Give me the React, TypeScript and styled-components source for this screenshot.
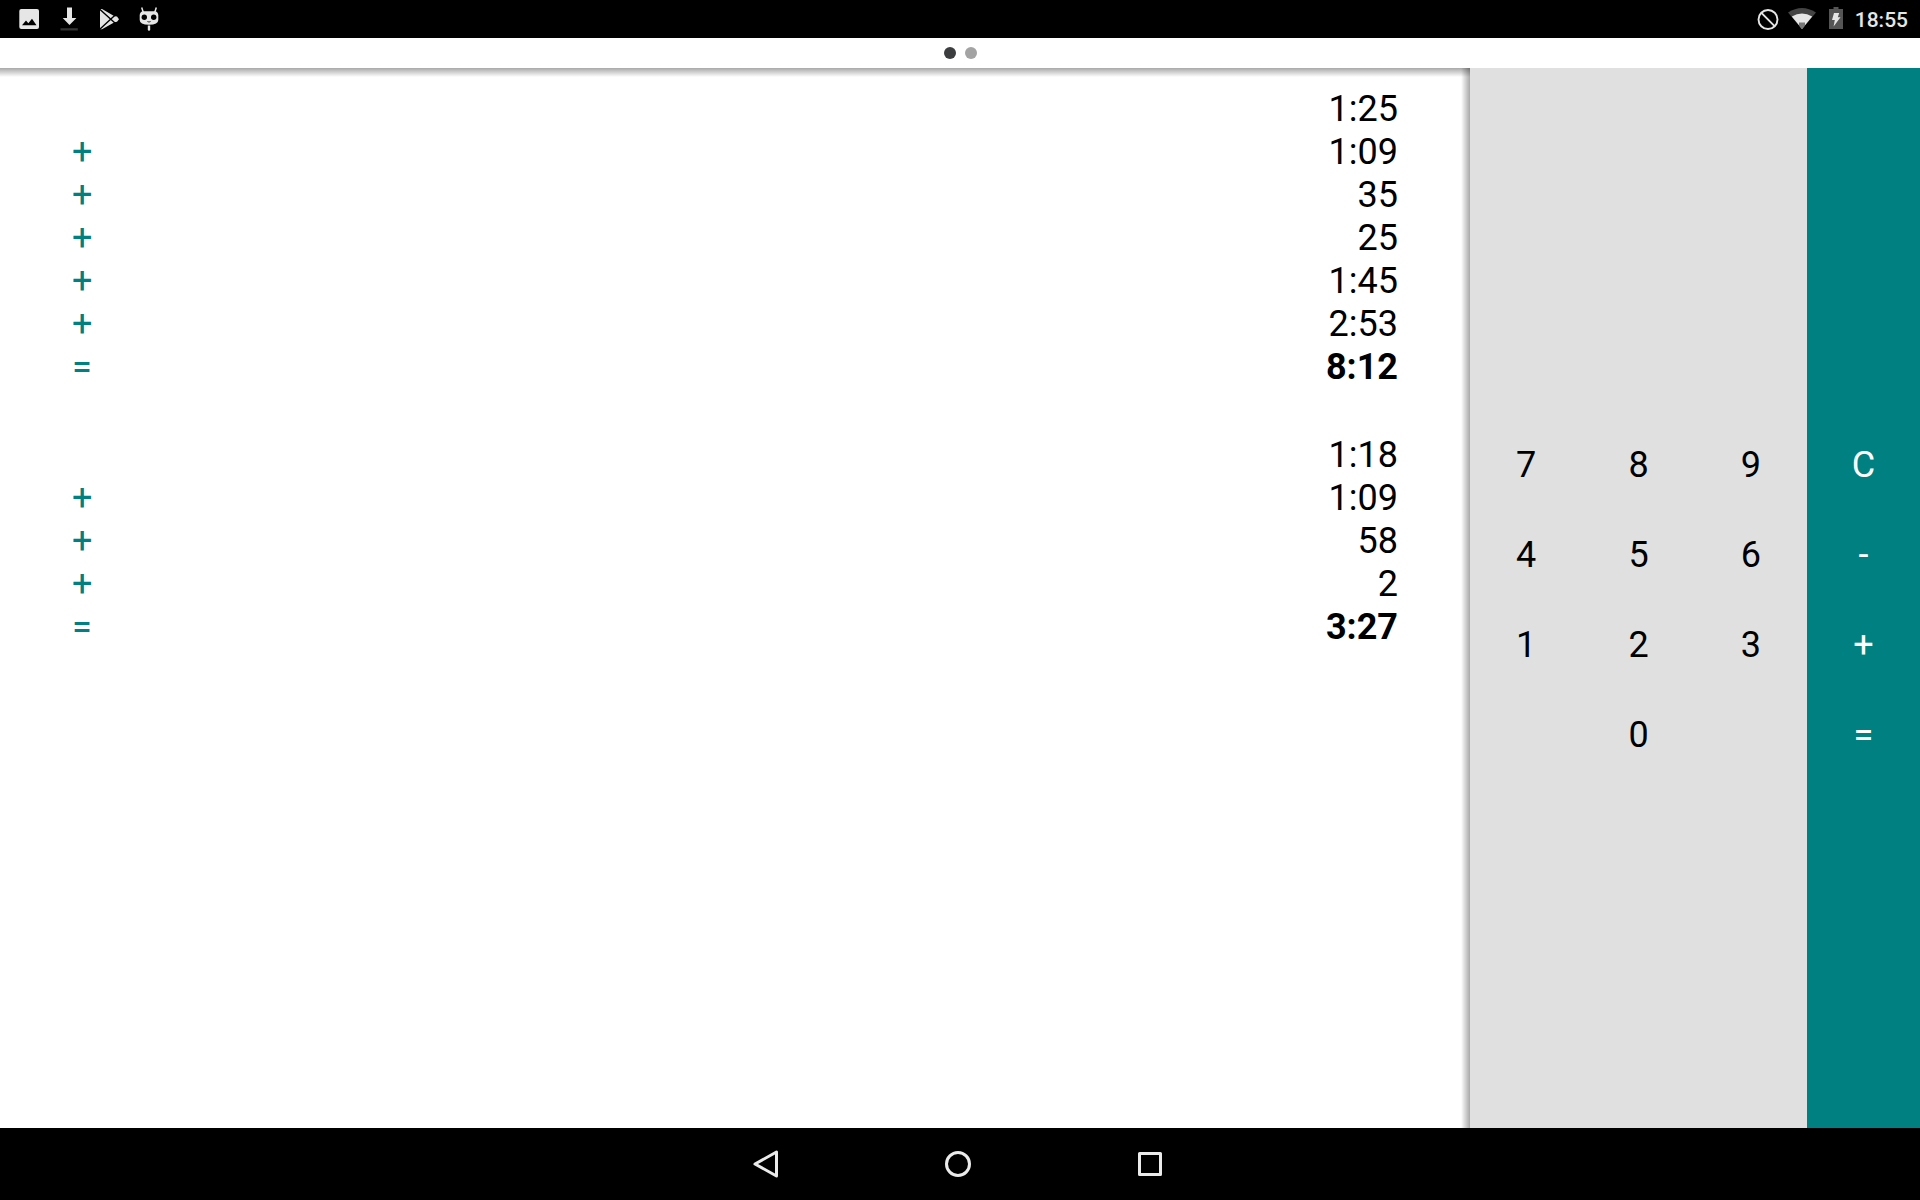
import React from "react";
import styled, { createGlobalStyle } from "styled-components";

const GlobalStyle = createGlobalStyle`
  * { box-sizing: border-box; }
  body { margin: 0; background: #000; font-family: Roboto, "Noto Sans", sans-serif; }
`;

const Screen = styled.div`
  display: flex;
  flex-direction: column;
  min-height: 100vh;
`;

const StatusBar = styled.header`
  display: flex;
  align-items: center;
  justify-content: space-between;
  height: 38px;
  padding: 0 12px 0 14px;
  background: #000;
  color: #e6e6e6;
`;

const IconGroup = styled.div<{ $gap: number }>`
  display: flex;
  align-items: center;
  gap: ${(p) => p.$gap}px;
`;

const StatusIcon = styled.svg`
  display: block;
  width: 30px;
  height: 30px;
`;

const Clock = styled.time`
  padding-top: 2px;
  font-size: 21px;
  font-weight: 500;
  line-height: 30px;
`;

const Pager = styled.nav`
  display: flex;
  align-items: center;
  justify-content: center;
  gap: 9px;
  height: 30px;
  background: #fff;
`;

const PageDot = styled.button<{ $active?: boolean }>`
  width: 12px;
  height: 12px;
  padding: 0;
  border: 0;
  border-radius: 50%;
  background: ${(p) => (p.$active ? "#3c3d3f" : "#a3a3a3")};
`;

const Workspace = styled.main`
  display: flex;
  flex: 1;
`;

const Tape = styled.section`
  flex: 1;
  display: flex;
  flex-direction: column;
  gap: 45px;
  padding: 20px 72px;
  background:
    linear-gradient(to bottom, rgba(0, 0, 0, 0.34), rgba(0, 0, 0, 0)) top / 100% 9px no-repeat,
    linear-gradient(to left, rgba(0, 0, 0, 0.34), rgba(0, 0, 0, 0)) right / 9px 100% no-repeat,
    #fff;
`;

const Sum = styled.ol`
  margin: 0;
  padding: 0;
  list-style: none;
`;

const Entry = styled.li<{ $total: boolean }>`
  display: flex;
  justify-content: space-between;
  font-size: 36px;
  line-height: 43px;
  font-weight: ${(p) => (p.$total ? 700 : 400)};
  color: #000;
`;

const Operator = styled.span`
  font-weight: 400;
  color: #008080;
`;

const Keyboard = styled.section`
  display: grid;
  grid-template-columns: 337px 113px;
`;

const KeyPanel = styled.div<{ $columns: number; $tone: "digits" | "actions" }>`
  display: grid;
  grid-template-columns: repeat(${(p) => p.$columns}, 1fr);
  grid-auto-rows: 90px;
  align-content: center;
  padding-top: 4px;
  background: ${(p) => (p.$tone === "digits" ? "#e0e0e0" : "#008080")};
  color: ${(p) => (p.$tone === "digits" ? "#000" : "#fff")};
`;

const Key = styled.button<{ $column?: number }>`
  grid-column: ${(p) => p.$column ?? "auto"};
  padding: 0;
  border: 0;
  background: transparent;
  color: inherit;
  font: 400 36px/43px Roboto, "Noto Sans", sans-serif;
`;

const NavBar = styled.footer`
  display: flex;
  justify-content: center;
  height: 72px;
  padding-right: 4px;
  background: #000;
`;

const NavButton = styled.button`
  display: flex;
  align-items: center;
  justify-content: center;
  width: 192px;
  padding: 0;
  border: 0;
  background: transparent;
`;

const NavIcon = styled.svg`
  width: 48px;
  height: 48px;
  fill: none;
  stroke: #ebebeb;
  stroke-width: 3;
  stroke-linejoin: round;
`;

type Line = { op: string; value: string };

const sums: Line[][] = [
  [
    { op: "", value: "1:25" },
    { op: "+", value: "1:09" },
    { op: "+", value: "35" },
    { op: "+", value: "25" },
    { op: "+", value: "1:45" },
    { op: "+", value: "2:53" },
    { op: "=", value: "8:12" },
  ],
  [
    { op: "", value: "1:18" },
    { op: "+", value: "1:09" },
    { op: "+", value: "58" },
    { op: "+", value: "2" },
    { op: "=", value: "3:27" },
  ],
];

const digits = ["7", "8", "9", "4", "5", "6", "1", "2", "3", "0"];
const actions = ["C", "-", "+", "="];

const PictureIcon = () => (
  <StatusIcon viewBox="0 0 30 30" aria-hidden="true">
    <rect x="5.3" y="5" width="19.7" height="20" rx="2" fill="#e6e6e6" />
    <path d="M8 21.3 12 16.5 14.3 19.2 18 14.8 22.5 21.3Z" fill="#000" />
  </StatusIcon>
);

const DownloadIcon = () => (
  <StatusIcon viewBox="0 0 30 30" aria-hidden="true">
    <path d="M13 3.5h5V14h4.4l-6.9 7L8.7 14H13Z" fill="#e6e6e6" />
    <path d="M6.5 24.2h17.3v2.3H6.5Z" fill="#333" />
  </StatusIcon>
);

const PlayIcon = () => (
  <StatusIcon viewBox="0 0 30 30" aria-hidden="true">
    <path d="M6 5H8L20.500 12.200 23 12.600 25 15.200 23 17.800 20.500 18.200 8 25.200H6Z" fill="#e6e6e6" />
    <path d="M5.500 5 21.500 19.600M5.500 25.400 21.500 10.800" stroke="#000" strokeWidth="1.400" />
  </StatusIcon>
);

const RobotIcon = () => (
  <StatusIcon viewBox="0 0 30 30" aria-hidden="true">
    <path d="M7.700 3.500 9.300 8.500M22.300 3.500 20.700 8.500" stroke="#e6e6e6" strokeWidth="1.500" />
    <path d="M9.500 7.300H20.500Q24.300 7.500 24.300 11.500V16Q24.300 20.700 15 20.700T5.700 16V11.500Q5.700 7.500 9.500 7.300Z" fill="#e6e6e6" />
    <circle cx="10.300" cy="13.300" r="2.700" fill="#000" />
    <circle cx="19.700" cy="13.300" r="2.700" fill="#000" />
    <path d="M13.400 17.500Q15 18.600 16.600 17.500" fill="none" stroke="#000" strokeWidth="0.800" />
    <path d="M13.800 21.400h2.400V26l-1.200 1-1.200-1Z" fill="#e6e6e6" />
  </StatusIcon>
);

const BlockedIcon = () => (
  <StatusIcon viewBox="0 0 30 30" aria-hidden="true">
    <g fill="none" stroke="#e6e6e6" strokeWidth="1.900">
      <circle cx="15" cy="15.500" r="9.500" />
      <path d="M8.400 8.900 21.600 22.100" />
    </g>
  </StatusIcon>
);

const WifiIcon = () => (
  <StatusIcon viewBox="0 0 30 30" aria-hidden="true">
    <path d="M1 8.500Q15 -0.500 29 8.500L15 25Z" fill="#444" />
    <path d="M4.800 12.500Q15 6.500 25.200 12.500L15 25Z" fill="#e6e6e6" />
    <path d="M12 18.500h6v3L15 25l-3-3.500Z" fill="#777" />
  </StatusIcon>
);

const BatteryIcon = () => (
  <StatusIcon viewBox="0 0 30 30" aria-hidden="true">
    <path d="M12.500 3h5v2h4.500V25H8V5h4.500Z" fill="#555" />
    <path d="M13 9h5.200l-1.400 4.300h2.700L12.600 22.500l1.200-6.500H11Z" fill="#e6e6e6" />
  </StatusIcon>
);

export default function App() {
  return (
    <>
      <GlobalStyle />
      <Screen>
        <StatusBar>
          <IconGroup $gap={10}>
            <PictureIcon />
            <DownloadIcon />
            <PlayIcon />
            <RobotIcon />
          </IconGroup>
          <IconGroup $gap={4}>
            <BlockedIcon />
            <WifiIcon />
            <BatteryIcon />
            <Clock>18:55</Clock>
          </IconGroup>
        </StatusBar>

        <Pager aria-label="Pages">
          <PageDot $active aria-label="Page 1" />
          <PageDot aria-label="Page 2" />
        </Pager>

        <Workspace>
          <Tape>
            {sums.map((lines, s) => (
              <Sum key={s}>
                {lines.map((line, i) => (
                  <Entry key={i} $total={line.op === "="}>
                    <Operator>{line.op}</Operator>
                    <span>{line.value}</span>
                  </Entry>
                ))}
              </Sum>
            ))}
          </Tape>

          <Keyboard>
            <KeyPanel $columns={3} $tone="digits">
              {digits.map((d) => (
                <Key key={d} type="button" $column={d === "0" ? 2 : undefined}>
                  {d}
                </Key>
              ))}
            </KeyPanel>
            <KeyPanel $columns={1} $tone="actions">
              {actions.map((a) => (
                <Key key={a} type="button">
                  {a}
                </Key>
              ))}
            </KeyPanel>
          </Keyboard>
        </Workspace>

        <NavBar>
          <NavButton type="button" aria-label="Back">
            <NavIcon viewBox="0 0 48 48">
              <path d="M13 24 34.500 12V36Z" />
            </NavIcon>
          </NavButton>
          <NavButton type="button" aria-label="Home">
            <NavIcon viewBox="0 0 48 48">
              <circle cx="24" cy="24" r="11.500" />
            </NavIcon>
          </NavButton>
          <NavButton type="button" aria-label="Recent apps">
            <NavIcon viewBox="0 0 48 48">
              <rect x="13.500" y="13.500" width="21" height="21" />
            </NavIcon>
          </NavButton>
        </NavBar>
      </Screen>
    </>
  );
}
